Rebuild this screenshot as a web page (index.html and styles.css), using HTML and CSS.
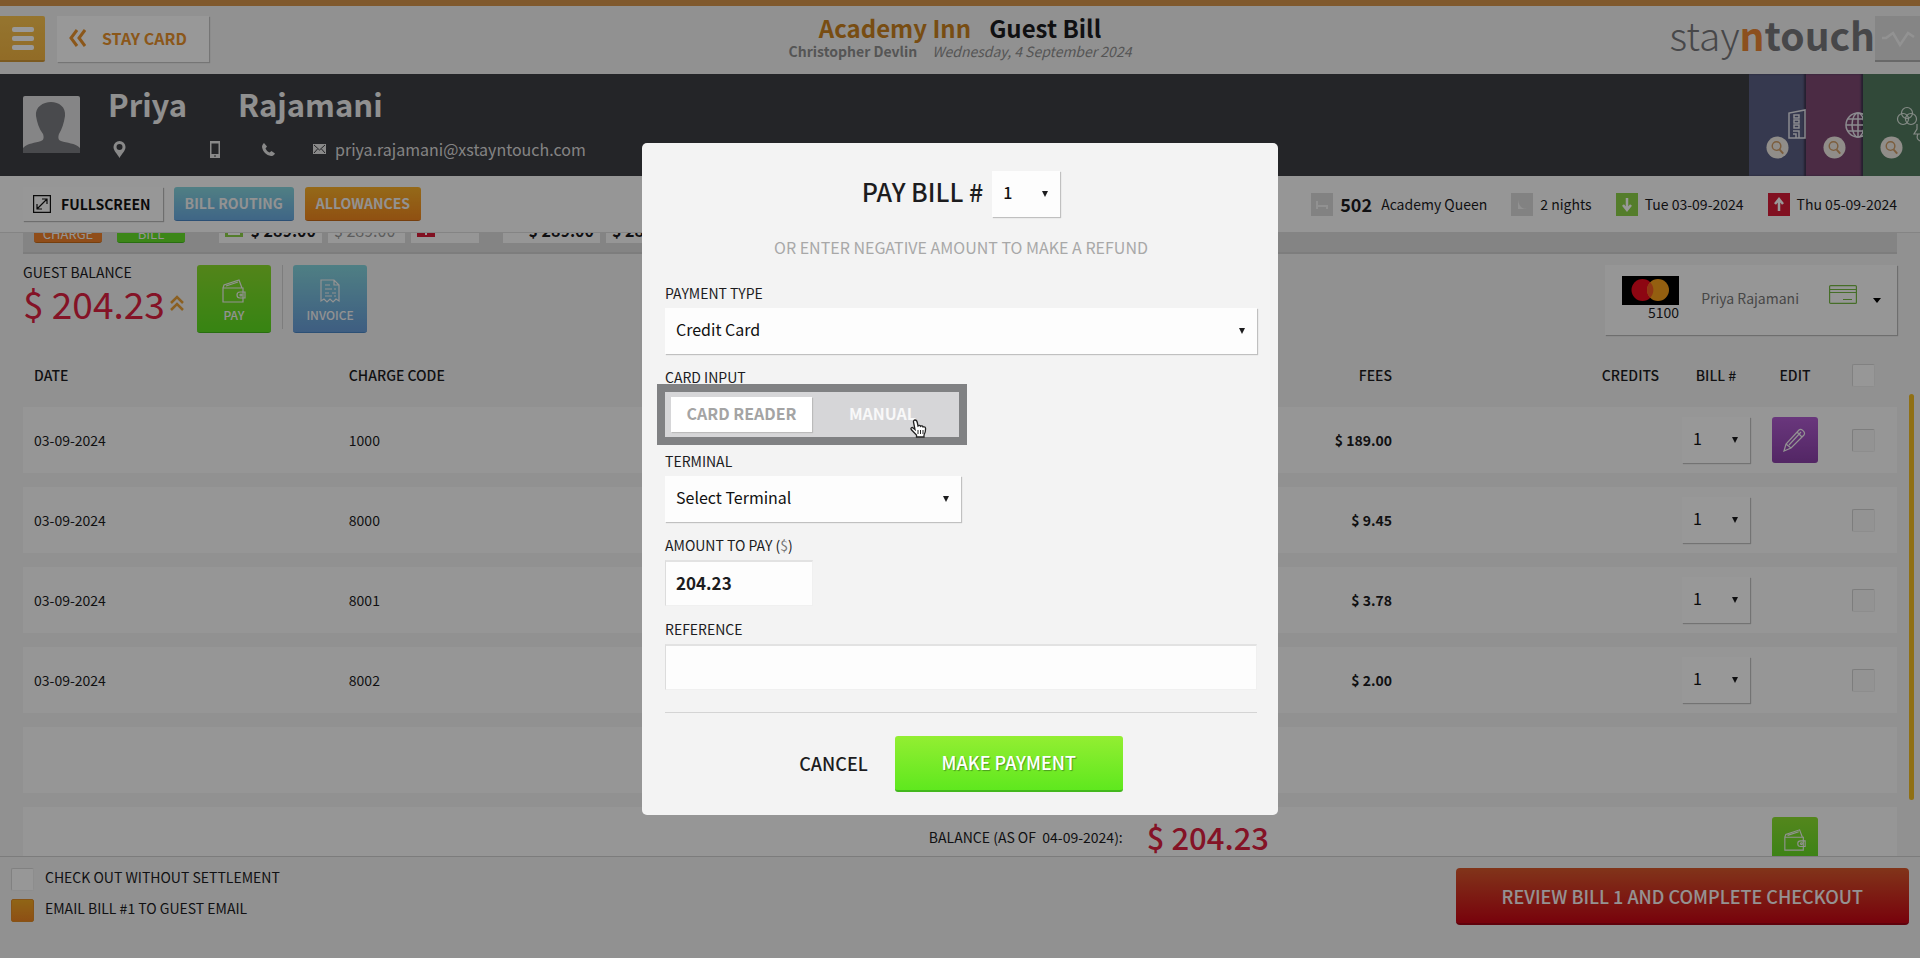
FILE: index.html
```html
<!DOCTYPE html>
<html lang="en">
<head>
<meta charset="utf-8">
<title>Guest Bill</title>
<link rel="stylesheet" href="styles.css">
</head>
<body>
<svg class="sprite" aria-hidden="true">
  <symbol id="wallet" viewBox="0 0 26 26"><path d="M2 10h20v14H2zM2 10l1-3 15-5 3 8M5 8l12-4M24 14v6h-5a3 3 0 0 1 0-6zM2 10v4"/><circle cx="20" cy="17" r="1"/></symbol>
  <symbol id="search" viewBox="0 0 24 24"><circle cx="12" cy="12" r="11.500" fill="#f0ebe4"/><circle cx="11" cy="10.500" r="4.500" fill="none" stroke="#cf9c66" stroke-width="1.500"/><path d="M14 14l4 4.500" stroke="#cf9c66" stroke-width="2"/></symbol>
</svg>
<div class="page">
  <header class="topbar">
    <div class="topbar-left">
      <button class="menu" aria-label="Menu"><span></span><span></span><span></span></button>
      <button class="staycard"><svg width="18" height="18" viewBox="0 0 18 18" fill="none" stroke="#e8912c" stroke-width="3"><path d="M9 1L3 9l6 8M17 1l-6 8 6 8"/></svg>STAY CARD</button>
    </div>
    <div class="titles">
      <h1><span>Academy Inn</span>Guest Bill</h1>
      <p><b>Christopher Devlin</b><i>Wednesday, 4 September 2024</i></p>
    </div>
    <div class="topbar-right">
      <div class="logo">stay<span>n</span><b>touch</b></div>
      <button class="pulse" aria-label="Activity"><svg width="36" height="20" viewBox="0 0 36 20" fill="none" stroke="#f4f4f4" stroke-width="2.500"><path d="M2 10h4l7-5 7 12 8-12 6 4"/></svg></button>
    </div>
  </header>

  <section class="guest">
    <svg class="avatar" width="57" height="57" viewBox="0 0 57 57"><rect width="57" height="57" rx="2" fill="#dededf"/><path d="M0 57v-5c5-5 12-5 18-7 3-1 3-4 2-7-4-5-6-12-7-18C12 11 20 6 28 6s15 5 14 14c-1 7-3 13-6 18-1 3-1 6 2 7 6 2 14 2 19 7v5z" fill="#7b7c80"/></svg>
    <div class="guest-info">
      <h2><span>Priya</span> <span>Rajamani</span></h2>
      <div class="contacts">
        <svg class="c-pin" width="13" height="17" viewBox="0 0 13 17"><path d="M6.500 0a6 6 0 0 1 6 6c0 4-4 7-6 11-2-4-6-7-6-11a6 6 0 0 1 6-6zm0 3a3 3 0 1 0 0 6 3 3 0 0 0 0-6z" fill="#e4e4e4" fill-rule="evenodd"/></svg>
        <svg class="c-mob" width="10" height="17" viewBox="0 0 10 17"><path d="M0 0h10v17H0zM1.500 2.500v10.500h7V2.500z" fill="#e4e4e4" fill-rule="evenodd"/><path d="M4 15h2" stroke="#3c3e43"/></svg>
        <svg class="c-tel" width="13" height="13" viewBox="0 0 13 13"><path d="M2 0l3 3.500L3.500 5.500c1 2 2 3 4 4L9.500 8l3.500 2.500c-1 2-2.500 2.500-4 2.500C4 12 1 9 0 4c0-1.500 1-3.500 2-4z" fill="#e4e4e4"/></svg>
        <svg class="c-mail" width="13" height="10" viewBox="0 0 13 10"><rect width="13" height="10" fill="#e4e4e4"/><path d="M1 1l5.500 5L12 1M1 9l3.500-4M12 9L8.500 5" stroke="#3c3e43" fill="none"/></svg>
        <span>priya.rajamani@xstayntouch.com</span>
      </div>
    </div>
    <div class="tabs">
      <button class="tab tab-blue" aria-label="Reservations"><svg class="tab-icon" width="30" height="40" viewBox="0 0 30 40"><g fill="none" stroke="#e8e8ee" stroke-width="1.500"><path d="M13 33V8l16-3v28zM18 10h5v3h-5zM18 15h5v3h-5zM18 20h5v3h-5zM17 26h6v7M17 29h3v4"/></g></svg><svg class="tab-search" width="23" height="23"><use href="#search"/></svg></button>
      <button class="tab tab-plum" aria-label="Web"><svg class="tab-icon" width="30" height="40" viewBox="0 0 30 40"><g fill="none" stroke="#e8e8ee" stroke-width="1.500"><circle cx="25" cy="20" r="12"/><ellipse cx="25" cy="20" rx="6" ry="12"/><path d="M13 20h17M15 14h15M15 26h15M25 8v24"/></g></svg><svg class="tab-search" width="23" height="23"><use href="#search"/></svg></button>
      <button class="tab tab-green" aria-label="Groups"><svg class="tab-icon" width="30" height="40" viewBox="0 0 30 40"><g fill="none" stroke="#dfe8e0" stroke-width="1.200"><circle cx="17" cy="8" r="5.500"/><circle cx="13" cy="14" r="5.500"/><circle cx="21" cy="14" r="5.500"/><path d="M27 19v5l-3 5h6M28 29c-2 4 0 6 2 7"/></g></svg><svg class="tab-search" width="23" height="23"><use href="#search"/></svg></button>
    </div>
  </section>

  <section class="actions">
    <button class="btn btn-white"><svg width="18" height="18" viewBox="0 0 18 18" fill="none" stroke="#111" stroke-width="1.200"><path d="M.6.6h16.800v16.800H.6zM4 14L14 4M9 4h5v5M4 9v5h5"/></svg>FULLSCREEN</button>
    <button class="btn btn-blue">BILL ROUTING</button>
    <button class="btn btn-orange">ALLOWANCES</button>
    <ul class="stay">
      <li><svg width="22" height="23" viewBox="0 0 22 23"><rect width="22" height="23" fill="#d9d9d9"/><path d="M6 8v8M6 13h10v3" stroke="#f2f2f2" stroke-width="2" fill="none"/></svg><strong>502</strong><span>Academy Queen</span></li>
      <li><svg width="22" height="23" viewBox="0 0 22 23"><rect width="22" height="23" fill="#d9d9d9"/><path d="M7 7v9h9c-5 0-8-3-9-9z" fill="#f2f2f2"/></svg><span>2 nights</span></li>
      <li><svg width="22" height="23" viewBox="0 0 22 23"><rect width="22" height="23" fill="#8cd048"/><path d="M11 5v12M7 12l4 5 4-5" stroke="#fff" stroke-width="2.500" fill="none"/></svg><span>Tue 03-09-2024</span></li>
      <li><svg width="22" height="23" viewBox="0 0 22 23"><rect width="22" height="23" fill="#d81c38"/><path d="M11 18V6M7 11l4-5 4 5" stroke="#fff" stroke-width="2.500" fill="none"/></svg><span>Thu 05-09-2024</span></li>
    </ul>
  </section>

  <main class="content">
    <div class="strip">
      <button class="mini mini-orange">CHARGE</button>
      <button class="mini mini-green">BILL</button>
      <div class="price price-a"><svg width="18" height="17" viewBox="0 0 18 17"><rect width="18" height="14" fill="#8cd048"/><path d="M3 11h12" stroke="#fff" stroke-width="2"/></svg>$ 289.00</div>
      <div class="price price-b">$ 289.00</div>
      <div class="price price-c"><svg width="18" height="17" viewBox="0 0 18 17"><rect width="18" height="14" fill="#d81c38"/><path d="M9 4v8" stroke="#fff" stroke-width="2"/></svg></div>
      <div class="price price-d">$ 289.00</div>
      <div class="price price-e">$ 289.00</div>
    </div>

    <div class="summary">
      <div class="balance">
        <div class="balance-label">GUEST BALANCE</div>
        <div class="balance-value">$ 204.23 <svg width="14" height="17" viewBox="0 0 14 17" fill="none" stroke="#e8a03a" stroke-width="2.500"><path d="M1 8l6-6 6 6M1 15l6-6 6 6"/></svg></div>
      </div>
      <button class="tile tile-green"><svg width="26" height="26"><use href="#wallet"/></svg>PAY</button>
      <div class="divider"></div>
      <button class="tile tile-blue"><svg width="26" height="26" viewBox="0 0 26 26"><path d="M4 2h13l5 5v16l-3-2-3 3-3-3-3 3-3-3-3 2zM17 2v5h5M8 7h5M8 11h7M8 15h4M8 18h7M17 11h2M15 15h4M17 18h2"/></svg>INVOICE</button>
      <button class="card-select">
        <span class="brand"><svg width="57" height="29" viewBox="0 0 57 29"><rect width="57" height="29" fill="#000"/><circle cx="20.500" cy="14" r="11" fill="#eb0a1e"/><circle cx="36" cy="14" r="11" fill="#f79e1b"/><path d="M28.200 6.300a11 11 0 0 1 0 15.400 11 11 0 0 1 0-15.400z" fill="#f15a22"/></svg>5100</span>
        <span class="holder">Priya Rajamani</span>
        <svg width="28" height="19" viewBox="0 0 28 19" fill="none" stroke="#76b843" stroke-width="1.200"><rect x=".6" y=".6" width="26.800" height="17.800" rx="1"/><path d="M1 4.500h26M1 7.500h26M14 14.500h9"/></svg>
        <svg width="8" height="5" viewBox="0 0 8 5"><path d="M0 0h8L4 5z"/></svg>
      </button>
    </div>

    <table class="charges">
      <thead>
        <tr><th class="c-date">DATE</th><th class="c-code">CHARGE CODE</th><th class="c-fees">FEES</th><th class="c-credits">CREDITS</th><th class="c-bill">BILL #</th><th class="c-edit">EDIT</th><th class="c-check"><input type="checkbox" class="check" aria-label="Select all"></th></tr>
      </thead>
      <tbody>
        <tr><td>03-09-2024</td><td>1000</td><td class="c-fees">$ 189.00</td><td></td><td class="c-bill"><span class="select"><select aria-label="Bill number"><option>1</option></select></span></td><td class="c-edit"><button class="sq sq-purple" aria-label="Edit"><svg width="24" height="24" viewBox="0 0 24 24"><path d="M1 23l2-7L16 2c2-2 7 2 5 5L8 20zM3 16l5 4M6 17L18 4M14 4l5 5"/></svg></button></td><td class="c-check"><input type="checkbox" class="check check-grey" aria-label="Select"></td></tr>
        <tr><td>03-09-2024</td><td>8000</td><td class="c-fees">$ 9.45</td><td></td><td class="c-bill"><span class="select"><select aria-label="Bill number"><option>1</option></select></span></td><td></td><td class="c-check"><input type="checkbox" class="check check-grey" aria-label="Select"></td></tr>
        <tr><td>03-09-2024</td><td>8001</td><td class="c-fees">$ 3.78</td><td></td><td class="c-bill"><span class="select"><select aria-label="Bill number"><option>1</option></select></span></td><td></td><td class="c-check"><input type="checkbox" class="check check-grey" aria-label="Select"></td></tr>
        <tr><td>03-09-2024</td><td>8002</td><td class="c-fees">$ 2.00</td><td></td><td class="c-bill"><span class="select"><select aria-label="Bill number"><option>1</option></select></span></td><td></td><td class="c-check"><input type="checkbox" class="check check-grey" aria-label="Select"></td></tr>
        <tr><td colspan="7"></td></tr>
        <tr><td colspan="4" class="total"><span>BALANCE (AS OF &nbsp;04-09-2024):</span><strong>$ 204.23</strong></td><td></td><td class="c-edit"><button class="sq sq-green" aria-label="Pay"><svg width="24" height="24"><use href="#wallet"/></svg></button></td><td></td></tr>
      </tbody>
    </table>
    <div class="scrollbar"></div>
  </main>

  <footer class="footer">
    <div class="options">
      <label><input type="checkbox" class="check">CHECK OUT WITHOUT SETTLEMENT</label>
      <label><input type="checkbox" class="check" checked>EMAIL BILL #1 TO GUEST EMAIL</label>
    </div>
    <button class="checkout">REVIEW BILL 1 AND COMPLETE CHECKOUT</button>
  </footer>
</div>

<div class="backdrop">
  <form class="dialog" role="dialog" aria-labelledby="pay-title">
    <div class="dialog-title">
      <label id="pay-title" for="bill">PAY BILL #</label>
      <span class="select"><select id="bill"><option>1</option></select></span>
    </div>
    <p class="hint">OR ENTER NEGATIVE AMOUNT TO MAKE A REFUND</p>
    <div class="field">
      <label for="type">PAYMENT TYPE</label>
      <span class="select"><select id="type"><option>Credit Card</option></select></span>
    </div>
    <div class="field half">
      <span class="field-label" id="ci">CARD INPUT</span>
      <div class="toggle" role="group" aria-labelledby="ci">
        <button type="button" class="on">CARD READER</button>
        <button type="button">MANUAL</button>
        <svg class="cursor" width="17" height="19" viewBox="0 0 17 19"><path d="M5 1c1.500 0 2 1 2.300 2.500L8 7c1-1 2.200-.6 2.500.3 1-.8 2.200-.3 2.500.7 1.500-.6 2.600.2 2.600 1.800 0 3-.3 4.200-1.600 6.200v2H6.500v-2L1.200 10.500C.4 9 2 7.800 3.200 9L5 10.600 3.500 3C3.300 2 4 1 5 1z" fill="#fff" stroke="#222" stroke-width="1.300"/><path d="M8 11v4M10.500 11v4M13 11v4" stroke="#222"/></svg>
      </div>
    </div>
    <div class="field half">
      <label for="term">TERMINAL</label>
      <span class="select"><select id="term"><option>Select Terminal</option></select></span>
    </div>
    <div class="field quarter">
      <label for="amount">AMOUNT TO PAY (<span>$</span>)</label>
      <input id="amount" class="text" value="204.23">
    </div>
    <div class="field">
      <label for="ref">REFERENCE</label>
      <input id="ref" class="text">
    </div>
    <div class="dialog-actions">
      <button type="button" class="cancel">CANCEL</button>
      <button type="button" class="pay">MAKE PAYMENT</button>
    </div>
  </form>
</div>
</body>
</html>
```
FILE: styles.css
```css
* { box-sizing: border-box; }
body, h1, h2, p, ul { margin: 0; padding: 0; }
body, button, input, select {
  font-family: "Noto Sans CJK SC", "Noto Sans CJK JP", "Open Sans", sans-serif;
  font-size: 14px;
  line-height: 20px;
  color: #1c1c1e;
}
button { border: 0; margin: 0; padding: 0; background: none; }
svg { flex: none; display: block; }
ul { list-style: none; }
.sprite { position: absolute; width: 0; height: 0; }

.page { height: 100vh; display: flex; flex-direction: column; background: #f2f2f2; overflow: hidden; }

/* top bar */
.topbar {
  flex: none;
  height: 74px;
  border-top: 6px solid #d5944b;
  display: grid;
  grid-template-columns: 1fr auto 1fr;
}
.topbar-left { display: flex; align-items: flex-start; gap: 12px; padding-top: 10px; }
.menu {
  width: 45px; height: 46px;
  background: linear-gradient(#f9c34f, #f2b441);
  border-bottom: 2px solid #cf9636;
  border-radius: 0 2px 2px 0;
  display: flex; flex-direction: column; justify-content: center; align-items: center; gap: 4px;
}
.menu span { width: 22px; height: 5px; border-radius: 2px; background: #fff; }
.staycard {
  height: 46px; padding: 0 22px 2px 11px;
  display: flex; align-items: center; gap: 16px;
  background: #fdfdfd; box-shadow: 1px 1px 1px #c4c4c4;
  color: #e8912c; font-weight: 700; font-size: 16px;
}
.titles { text-align: center; padding-top: 8px; }
.titles h1 { font-size: 24px; line-height: 28px; font-weight: 700; display: flex; justify-content: center; gap: 18px; }
.titles h1 span { color: #c8811f; }
.titles p { color: #8e8e8e; font-size: 14px; line-height: 18px; display: flex; justify-content: center; gap: 15px; }
.titles b { font-weight: 700; }
.topbar-right { display: flex; justify-content: flex-end; align-items: flex-start; }
.logo { font-size: 39px; line-height: 56px; font-weight: 300; color: #77777a; }
.logo b { font-weight: 700; }
.logo span { font-weight: 700; color: #e98533; }
.pulse { width: 45px; height: 46px; margin-top: 10px; background: #dedede; border-bottom: 2px solid #b0b0b0; display: flex; align-items: center; padding-left: 5px; }

/* guest */
.guest { flex: none; height: 102px; background: #3c3e43; display: flex; padding-left: 23px; }
.avatar { margin-top: 22px; }
.guest-info { flex: 1; padding: 12px 0 0 28px; color: #f0f0f0; }
.guest-info h2 { font-size: 31px; line-height: 36px; font-weight: 700; display: flex; gap: 51px; }
.contacts { display: flex; align-items: center; height: 24px; margin-top: 15px; color: #dcdcdc; font-size: 16px; padding-left: 5px; }
.c-mob { margin-left: 84px; }
.c-tel { margin-left: 42px; }
.c-mail { margin: 0 9px 0 38px; }
.tabs { display: flex; }
.tab { width: 57px; position: relative; overflow: hidden; }
.tab-blue { background: #5a5f84; }
.tab-plum { background: #7d4872; }
.tab-green { background: #527b60; }
.tab-icon { position: absolute; right: 0; top: 31px; }
.tab-search { position: absolute; left: 17px; top: 62px; }
.tab-blue, .tab-plum { box-shadow: inset -2px 0 2px #3f3550; }

/* actions */
.actions { flex: none; height: 57px; background: #fbfbfb; display: flex; align-items: center; gap: 11px; padding: 0 23px; border-bottom: 1px solid #dcdcdc; }
.btn { height: 34px; padding: 0 11px 1px; border-radius: 3px; font-weight: 700; color: #f4f4f4; }
.btn-white { color: #111; background: #fcfcfc; box-shadow: 1px 1px 1px #b8b8b8; display: flex; align-items: center; gap: 10px; padding: 0 12px 1px 10px; border-radius: 0; }
.btn-blue { background: linear-gradient(#86d4dc, #6aaae0); border-bottom: 1px solid #4a86c4; }
.btn-orange { background: linear-gradient(#f8b02a, #f0861e); border-bottom: 1px solid #c56a18; }
.stay { display: flex; gap: 24px; margin-left: auto; }
.stay li { display: flex; align-items: center; }
.stay svg { margin-right: 7px; }
.stay strong { font-size: 18px; margin-right: 9px; }

/* content */
.content { flex: 1; min-height: 0; overflow: hidden; padding: 0 23px; position: relative; }
.strip { height: 21px; background: #dddddd; border-bottom: 2px solid #d0d0d0; overflow: hidden; display: flex; align-items: flex-end; padding: 0 11px 9px; }
.mini { height: 36px; width: 68px; border-radius: 3px; color: #f7f7f7; font-size: 13px; line-height: 16px; padding-top: 18px; flex: none; }
.mini-orange { background: #f0802a; border-bottom: 1px solid #c56a18; }
.mini-green { background: #64e028; border-bottom: 1px solid #43b81c; margin: 0 34px 0 15px; }
.price { height: 40px; background: #fbfbfb; font-weight: 700; font-size: 16px; line-height: 20px; white-space: nowrap; display: flex; align-items: flex-end; padding: 0 6px 3px; flex: none; justify-content: space-between; }
.price-a { width: 103px; margin-right: 6px; }
.price-b { width: 77px; margin-right: 6px; color: #999; font-weight: 400; }
.price-c { width: 68px; margin-right: 24px; }
.price-d { width: 97px; margin-right: 6px; justify-content: flex-end; }
.price-e { width: 80px; }

.summary { display: flex; align-items: flex-start; padding-top: 11px; }
.balance { width: 174px; }
.balance-label { line-height: 14px; }
.balance-value { font-size: 37px; line-height: 40px; margin-top: 4px; color: #dc2040; font-weight: 400; display: flex; align-items: center; gap: 5px; white-space: nowrap; }
.tile { width: 74px; height: 68px; border-radius: 3px; color: #f4f4f4; font-size: 12px; font-weight: 500; display: flex; flex-direction: column; align-items: center; justify-content: center; gap: 1px; padding-top: 5px; }
.tile svg, .sq svg { fill: none; stroke: #f4f4f4; stroke-width: 1.2; }
.tile-green { background: linear-gradient(#8adc2c, #5cdc20); border-bottom: 1px solid #43b81c; }
.tile-blue { background: linear-gradient(#84d4dc, #689cd8); border-bottom: 1px solid #4a86c4; }
.divider { width: 1px; height: 64px; margin: 0 10px 0 11px; background: #d0d0d0; }
.card-select { margin-left: auto; height: 70px; padding: 11px 16px 0 17px; background: #fbfbfb; box-shadow: 1px 1px 1px #b8b8b8; display: flex; align-items: flex-start; }
.card-select > svg { margin: 9px 0 0 29px; }
.card-select > svg:last-child { margin: 22px 0 0 16px; }
.brand { display: flex; flex-direction: column; align-items: flex-end; line-height: 18px; }
.brand svg { margin-bottom: -2px; }
.holder { margin: 12px 1px 0 22px; color: #777; }

.charges { width: 100%; table-layout: fixed; border-collapse: separate; border-spacing: 0 14px; margin-top: 8px; }
.charges th { height: 36px; padding: 0 0 0 11px; text-align: left; font-weight: 500; }
.charges td { height: 66px; padding: 0 0 0 11px; background: #fbfbfb; }
.charges .c-date { width: 16.8%; }
.charges .c-fees { width: 20%; padding: 0 12px; text-align: right; }
.charges .c-credits { width: 267px; padding: 0 12px; text-align: right; }
.charges .c-bill { width: 90px; padding: 0; text-align: center; }
.charges .c-edit { width: 68px; padding: 0; text-align: center; }
.charges .c-check { width: 68px; padding: 0; text-align: center; }
.charges td.c-fees { font-weight: 700; }
.charges .select { width: 68px; vertical-align: middle; }
.charges .total { text-align: right; padding: 0 402px 6px 0; }
.total span { margin-right: 24px; vertical-align: middle; }
.total strong { color: #dc2040; font-size: 31px; line-height: 40px; font-weight: 500; vertical-align: middle; }
.sq { width: 46px; height: 46px; border-radius: 3px; display: inline-flex; align-items: center; justify-content: center; vertical-align: middle; }
.sq-purple { background: linear-gradient(#b05cd0, #8a40a8); }
.sq-green { background: linear-gradient(#8ce030, #60d824); }
.scrollbar { position: absolute; top: 161px; right: 6px; width: 5px; height: 406px; border-radius: 3px; background: #f0bb22; }

.check { appearance: none; flex: none; width: 23px; height: 23px; margin: 0; background: #fcfcfc; border: 1px solid #ececec; border-top-color: #d8d8d8; border-left-color: #d8d8d8; border-radius: 2px; vertical-align: middle; }
.check-grey { background: #f6f6f6; border-top-color: #d0d0d0; border-left-color: #d0d0d0; }
.check:checked { background: linear-gradient(#f0a824, #ec8422); border-color: #e08c28; }

.select { position: relative; display: inline-block; height: 46px; background: #fdfdfd; box-shadow: 1px 1px 1px #c0c0c0; }
.select select { appearance: none; width: 100%; height: 100%; border: 0; margin: 0; padding: 0 11px 4px; background: none; font-size: 16px; color: #111; }
.select::after { content: ""; position: absolute; right: 12px; top: 20px; border: 3px solid transparent; border-top: 6px solid #1c1c1e; border-bottom: 0; }

/* footer */
.footer { flex: none; height: 102px; padding: 11px 11px 0; background: #f2f2f2; border-top: 1px solid #cfcfcf; display: flex; justify-content: space-between; align-items: flex-start; }
.options { display: flex; flex-direction: column; gap: 8px; }
.options label { display: flex; align-items: flex-start; gap: 11px; line-height: 18px; height: 23px; }
.checkout { height: 57px; padding: 0 46px; border-radius: 4px; background: linear-gradient(#d8582c, #c80414); border-bottom: 2px solid #a00414; color: #f8f4f4; font-size: 18px; font-weight: 500; }

/* dialog */
.backdrop { position: fixed; inset: 0; background: rgba(0, 0, 0, .4); display: flex; align-items: center; justify-content: center; }
.dialog { width: 636px; padding: 28px 21px 23px 23px; border-radius: 5px; background: #f3f3f3; }
.dialog-title { display: flex; justify-content: center; align-items: center; gap: 9px; font-size: 25px; font-weight: 500; }
.dialog-title label { line-height: 32px; padding-bottom: 6px; }
.dialog-title .select { width: 68px; }
.dialog-title select { font-weight: 500; }
.hint { margin: 18px 0 24px; line-height: 24px; font-size: 16px; color: #a8a8a8; text-align: center; }
.field { display: flex; flex-direction: column; gap: 5px; margin-bottom: 13px; }
.field label span { color: #777; }
.half { width: 50%; }
.quarter { width: 25%; }
.text { height: 46px; width: 100%; padding: 0 10px 3px; border: 1px solid #f0f0f0; border-top: 2px solid #e2e2e2; border-left-color: #dcdcdc; background: #fdfdfd; font-size: 17px; font-weight: 700; }
.toggle { position: relative; height: 45px; margin: 0 2px 1px 0; padding: 5px 6px; background: #d6d6d8; outline: 8px solid #808183; display: flex; }
.toggle button { flex: 1; padding-bottom: 3px; color: #f8f8f8; font-size: 16px; font-weight: 700; }
.toggle .on { background: #fff; color: #a4a4a4; box-shadow: 1px 1px 1px #bbb; }
.cursor { position: absolute; left: 245px; top: 27px; }
.dialog-actions { border-top: 1px solid #d4d4d4; margin-top: 22px; padding-top: 23px; display: flex; justify-content: center; align-items: center; gap: 27px; }
.dialog-actions button { font-size: 18px; font-weight: 500; height: 56px; padding-bottom: 2px; }
.dialog-actions .pay { width: 228px; border-radius: 3px; background: linear-gradient(#93ee32, #5fe81e); border-bottom: 2px solid #43b81c; color: #fff; text-shadow: 1px 1px 1px #4a9a20; }
```
